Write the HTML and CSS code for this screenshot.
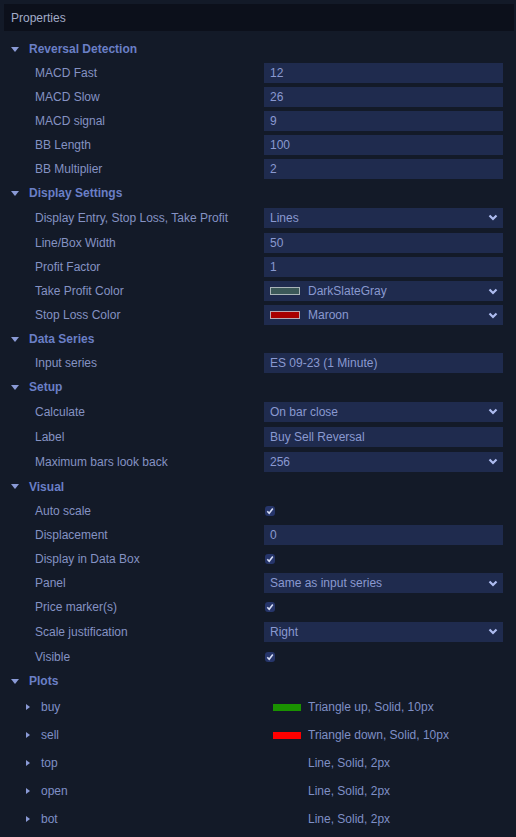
FILE: index.html
```html
<!DOCTYPE html>
<html>
<head>
<meta charset="utf-8">
<link rel="stylesheet" href="styles.css">
</head>
<body>
<div class="panel">
  <div class="title">Properties</div>

  <div class="section"><span class="caret-down"></span>Reversal Detection</div>
  <div class="row"><span class="label">MACD Fast</span><div class="field">12</div></div>
  <div class="row"><span class="label">MACD Slow</span><div class="field">26</div></div>
  <div class="row"><span class="label">MACD signal</span><div class="field">9</div></div>
  <div class="row"><span class="label">BB Length</span><div class="field">100</div></div>
  <div class="row"><span class="label">BB Multiplier</span><div class="field">2</div></div>

  <div class="section"><span class="caret-down"></span>Display Settings</div>
  <div class="row tall"><span class="label">Display Entry, Stop Loss, Take Profit</span><div class="field select">Lines<svg class="chev" width="10" height="7" viewBox="0 0 10 7"><path d="M1.5 1.5 L5 5 L8.5 1.5" fill="none" stroke="#aebcf0" stroke-width="2.2"/></svg></div></div>
  <div class="row tall"><span class="label">Line/Box Width</span><div class="field">50</div></div>
  <div class="row"><span class="label">Profit Factor</span><div class="field">1</div></div>
  <div class="row"><span class="label">Take Profit Color</span><div class="field select"><span class="swatch slate"></span>DarkSlateGray<svg class="chev" width="10" height="7" viewBox="0 0 10 7"><path d="M1.5 1.5 L5 5 L8.5 1.5" fill="none" stroke="#aebcf0" stroke-width="2.2"/></svg></div></div>
  <div class="row"><span class="label">Stop Loss Color</span><div class="field select"><span class="swatch maroon"></span>Maroon<svg class="chev" width="10" height="7" viewBox="0 0 10 7"><path d="M1.5 1.5 L5 5 L8.5 1.5" fill="none" stroke="#aebcf0" stroke-width="2.2"/></svg></div></div>

  <div class="section"><span class="caret-down"></span>Data Series</div>
  <div class="row"><span class="label">Input series</span><div class="field">ES 09-23 (1 Minute)</div></div>

  <div class="section"><span class="caret-down"></span>Setup</div>
  <div class="row tall"><span class="label">Calculate</span><div class="field select">On bar close<svg class="chev" width="10" height="7" viewBox="0 0 10 7"><path d="M1.5 1.5 L5 5 L8.5 1.5" fill="none" stroke="#aebcf0" stroke-width="2.2"/></svg></div></div>
  <div class="row tall"><span class="label">Label</span><div class="field">Buy Sell Reversal</div></div>
  <div class="row tall"><span class="label">Maximum bars look back</span><div class="field select">256<svg class="chev" width="10" height="7" viewBox="0 0 10 7"><path d="M1.5 1.5 L5 5 L8.5 1.5" fill="none" stroke="#aebcf0" stroke-width="2.2"/></svg></div></div>

  <div class="section tall"><span class="caret-down"></span>Visual</div>
  <div class="row"><span class="label">Auto scale</span><div class="check"><svg width="10" height="10" viewBox="0 0 10 10"><rect x="0" y="0" width="10" height="10" rx="3" fill="#26356a"/><path d="M2.3 5.2 L4.2 7.2 L7.8 2.6" fill="none" stroke="#d6ddf4" stroke-width="1.6"/></svg></div></div>
  <div class="row"><span class="label">Displacement</span><div class="field">0</div></div>
  <div class="row"><span class="label">Display in Data Box</span><div class="check"><svg width="10" height="10" viewBox="0 0 10 10"><rect x="0" y="0" width="10" height="10" rx="3" fill="#26356a"/><path d="M2.3 5.2 L4.2 7.2 L7.8 2.6" fill="none" stroke="#d6ddf4" stroke-width="1.6"/></svg></div></div>
  <div class="row"><span class="label">Panel</span><div class="field select">Same as input series<svg class="chev" width="10" height="7" viewBox="0 0 10 7"><path d="M1.5 1.5 L5 5 L8.5 1.5" fill="none" stroke="#aebcf0" stroke-width="2.2"/></svg></div></div>
  <div class="row"><span class="label">Price marker(s)</span><div class="check"><svg width="10" height="10" viewBox="0 0 10 10"><rect x="0" y="0" width="10" height="10" rx="3" fill="#26356a"/><path d="M2.3 5.2 L4.2 7.2 L7.8 2.6" fill="none" stroke="#d6ddf4" stroke-width="1.6"/></svg></div></div>
  <div class="row tall"><span class="label">Scale justification</span><div class="field select">Right<svg class="chev" width="10" height="7" viewBox="0 0 10 7"><path d="M1.5 1.5 L5 5 L8.5 1.5" fill="none" stroke="#aebcf0" stroke-width="2.2"/></svg></div></div>
  <div class="row tall"><span class="label">Visible</span><div class="check"><svg width="10" height="10" viewBox="0 0 10 10"><rect x="0" y="0" width="10" height="10" rx="3" fill="#26356a"/><path d="M2.3 5.2 L4.2 7.2 L7.8 2.6" fill="none" stroke="#d6ddf4" stroke-width="1.6"/></svg></div></div>

  <div class="section"><span class="caret-down"></span>Plots</div>
  <div class="plot"><span class="plabel"><span class="caret-right"></span>buy</span><div class="pval"><span class="pswatch green"></span>Triangle up, Solid, 10px</div></div>
  <div class="plot"><span class="plabel"><span class="caret-right"></span>sell</span><div class="pval"><span class="pswatch red"></span>Triangle down, Solid, 10px</div></div>
  <div class="plot"><span class="plabel"><span class="caret-right"></span>top</span><div class="pval"><span class="pswatch none"></span>Line, Solid, 2px</div></div>
  <div class="plot"><span class="plabel"><span class="caret-right"></span>open</span><div class="pval"><span class="pswatch none"></span>Line, Solid, 2px</div></div>
  <div class="plot"><span class="plabel"><span class="caret-right"></span>bot</span><div class="pval"><span class="pswatch none"></span>Line, Solid, 2px</div></div>
</div>
</body>
</html>
```

FILE: styles.css
```css
html, body {
  margin: 0;
  padding: 0;
  background: #131a28;
}
body {
  width: 516px;
  height: 837px;
  overflow: hidden;
  font-family: "Liberation Sans", Arial, sans-serif;
  font-size: 12px;
}
.panel {
  padding-top: 4px;
}
.title {
  height: 27px;
  margin-left: 4px;
  margin-right: 2px;
  margin-bottom: 6px;
  background: #0c101b;
  color: #a2abc8;
  display: flex;
  align-items: center;
  padding-left: 7px;
  box-sizing: border-box;
}
.section {
  height: 24px;
  display: flex;
  align-items: center;
  padding-left: 11px;
  color: #6a7fc6;
  font-weight: bold;
}
.section.tall { height: 25px; }
.caret-down {
  width: 0;
  height: 0;
  border-left: 4px solid transparent;
  border-right: 4px solid transparent;
  border-top: 5px solid #8a9ad6;
  margin-right: 10px;
}
.row {
  height: 24px;
  display: flex;
  align-items: center;
}
.row.tall { height: 25px; }
.label {
  width: 264px;
  padding-left: 35px;
  box-sizing: border-box;
  color: #8592c3;
  white-space: nowrap;
}
.field {
  width: 239px;
  height: 20px;
  background: #1f2b4e;
  color: #8a99d0;
  display: flex;
  align-items: center;
  padding-left: 6px;
  box-sizing: border-box;
  position: relative;
}
.select {
  padding-right: 5px;
}
.chev {
  margin-left: auto;
}
.swatch {
  width: 28px;
  height: 6px;
  border: 1px solid #a9b4b8;
  margin-right: 8px;
}
.swatch.slate { background: #3b5858; }
.swatch.maroon { background: #a80000; border-color: #b9a8b0; }
.check {
  width: 239px;
  padding-left: 1px;
  display: flex;
  align-items: center;
}
.check svg { display: block; }
.plot {
  height: 28px;
  display: flex;
  align-items: center;
}
.plabel {
  width: 264px;
  padding-left: 26px;
  box-sizing: border-box;
  display: flex;
  align-items: center;
  color: #7f8fc6;
}
.caret-right {
  width: 0;
  height: 0;
  border-top: 3px solid transparent;
  border-bottom: 3px solid transparent;
  border-left: 4px solid #8a9ad6;
  margin-right: 11px;
}
.pval {
  display: flex;
  align-items: center;
  color: #7f8fc6;
  padding-left: 9px;
}
.pswatch {
  width: 28px;
  height: 7px;
  margin-right: 7px;
}
.pswatch.green { background: #1a9200; }
.pswatch.red { background: #ff0000; }
.pswatch.none { background: transparent; }
```
